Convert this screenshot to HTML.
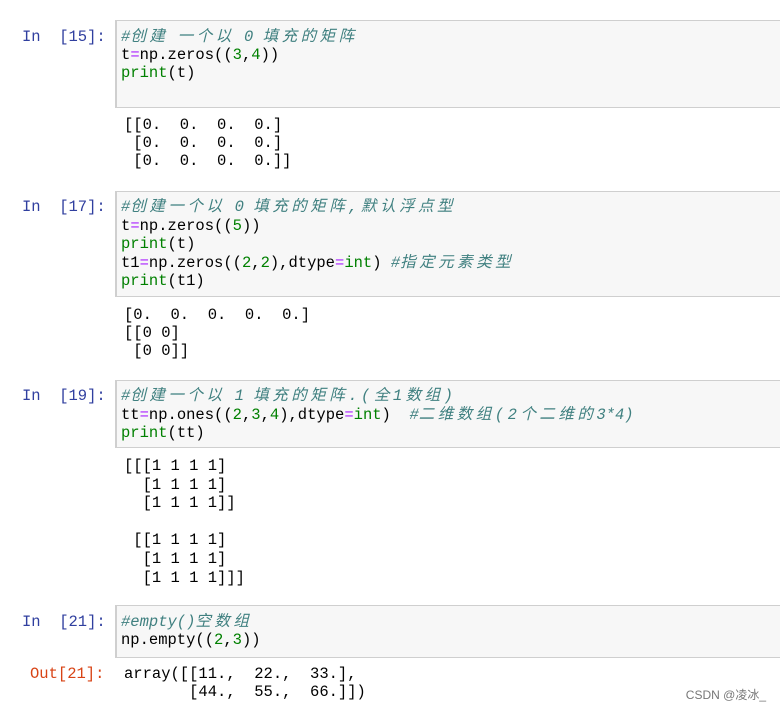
<!DOCTYPE html>
<html><head><meta charset="utf-8"><style>
body{margin:0;width:780px;height:711px;background:#fff;position:relative;overflow:hidden;font-family:"Liberation Mono","Noto Sans CJK SC",monospace;font-size:15.5px;}
.l{position:absolute;white-space:pre;line-height:18px;}
.box{position:absolute;left:115px;right:-2px;background:#f7f7f7;border:1px solid #cfcfcf;border-left:2px solid #cfcfcf;}
.p{color:#303F9F;left:22px}
.o{color:#D84315;left:30px}
.c{color:#408080;font-style:italic}
.z{letter-spacing:3.5px}
.g{color:#008000}
.e{color:#AA22FF}
.w{position:absolute;right:14px;bottom:8px;font-family:"Liberation Sans","Noto Sans CJK SC",sans-serif;font-size:12px;color:#777}
</style></head><body>
<div class="box" style="top:20px;height:86px"></div>
<div class="l p" style="top:28px">In  [15]:</div>
<div class="l" style="left:121px;top:28px"><span class="c">#<span class="z">创建</span> <span class="z">一个以</span> 0 <span class="z">填充的矩阵</span></span>
t<span class="e">=</span>np.zeros((<span class="g">3</span>,<span class="g">4</span>))
<span class="g">print</span>(t)</div>
<div class="l" style="left:124px;top:116px">[[0.  0.  0.  0.]
 [0.  0.  0.  0.]
 [0.  0.  0.  0.]]</div>

<div class="box" style="top:191px;height:104px"></div>
<div class="l p" style="top:198px">In  [17]:</div>
<div class="l" style="left:121px;top:198px;line-height:18.6px"><span class="c">#<span class="z">创建一个以</span> 0 <span class="z">填充的矩阵,默认浮点型</span></span>
t<span class="e">=</span>np.zeros((<span class="g">5</span>))
<span class="g">print</span>(t)
t1<span class="e">=</span>np.zeros((<span class="g">2</span>,<span class="g">2</span>),dtype<span class="e">=</span><span class="g">int</span>) <span class="c">#<span class="z">指定元素类型</span></span>
<span class="g">print</span>(t1)</div>
<div class="l" style="left:124px;top:306px">[0.  0.  0.  0.  0.]
[[0 0]
 [0 0]]</div>

<div class="box" style="top:380px;height:66px"></div>
<div class="l p" style="top:387px">In  [19]:</div>
<div class="l" style="left:121px;top:387px;line-height:18.6px"><span class="c">#<span class="z">创建一个以</span> 1 <span class="z">填充的矩阵.(全1数组)</span></span>
tt<span class="e">=</span>np.ones((<span class="g">2</span>,<span class="g">3</span>,<span class="g">4</span>),dtype<span class="e">=</span><span class="g">int</span>)  <span class="c">#<span class="z">二维数组(2个二维的</span>3*4)</span>
<span class="g">print</span>(tt)</div>
<div class="l" style="left:124px;top:457px;line-height:18.6px">[[[1 1 1 1]
  [1 1 1 1]
  [1 1 1 1]]

 [[1 1 1 1]
  [1 1 1 1]
  [1 1 1 1]]]</div>

<div class="box" style="top:605px;height:51px"></div>
<div class="l p" style="top:613px">In  [21]:</div>
<div class="l" style="left:121px;top:613px"><span class="c">#empty()<span class="z">空数组</span></span>
np.empty((<span class="g">2</span>,<span class="g">3</span>))</div>
<div class="l o" style="top:665px">Out[21]:</div>
<div class="l" style="left:124px;top:665px">array([[11.,  22.,  33.],
       [44.,  55.,  66.]])</div>
<div class="w">CSDN @凌冰_</div>
</body></html>
